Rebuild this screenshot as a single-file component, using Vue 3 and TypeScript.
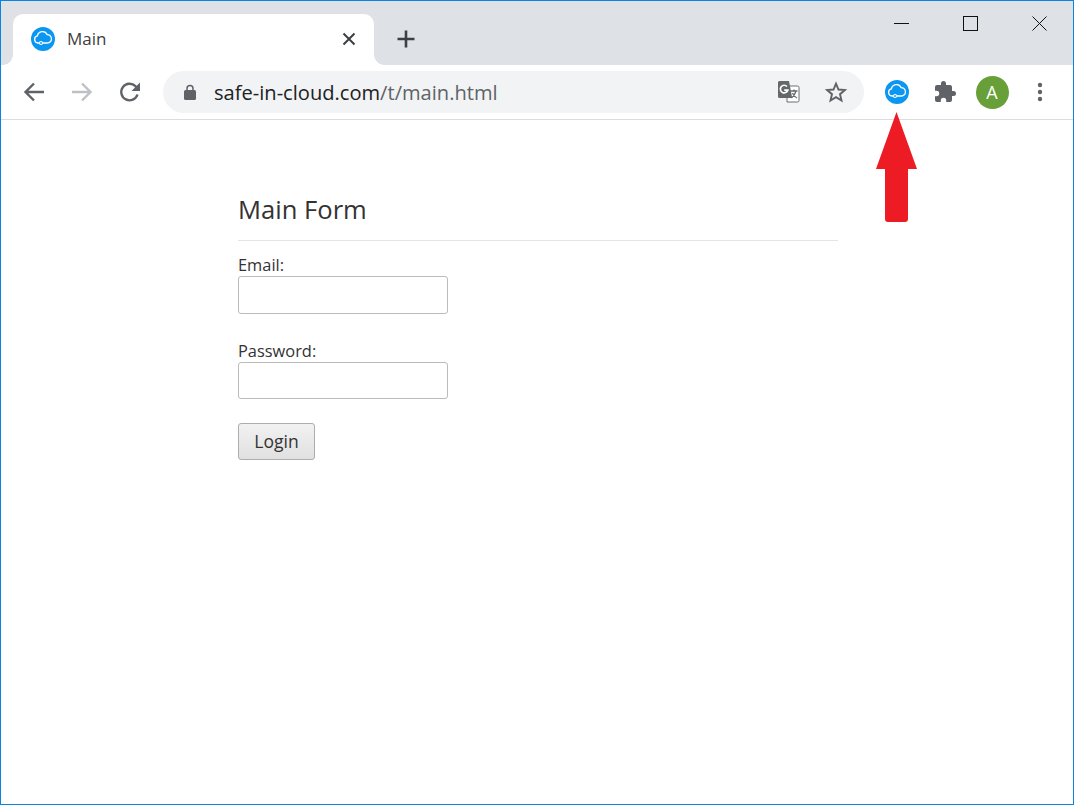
<script setup lang="ts">
const logoCloud = "M8.300 16H7a3.600 3.600 0 0 1-.6-7.100 5.200 5.200 0 0 1 9.800-1.300 4.200 4.200 0 0 1 1.800 8c-.5.300-1.100.4-1.800.4h-4.600"
</script>

<template>
  <div class="window">
    <header class="titlebar">
      <div class="tab">
        <svg class="logo" width="24" height="24" viewBox="0 0 24 24">
          <circle cx="12" cy="12" r="12" fill="#0b96f2" />
          <path :d="logoCloud" fill="none" stroke="#fff" stroke-width="1.300" />
          <circle cx="10" cy="16" r="1.500" fill="#0b96f2" stroke="#fff" stroke-width="1.100" />
        </svg>
        <span class="tab-title">Main</span>
        <svg class="tab-close" width="14" height="14" viewBox="0 0 14 14">
          <path d="M1.500 1.500l11 11M12.500 1.500l-11 11" stroke="#3c4043" stroke-width="2" />
        </svg>
      </div>
      <svg class="plus" width="20" height="20" viewBox="0 0 20 20">
        <path d="M10 1.500v17M1.500 10h17" stroke="#3c4043" stroke-width="2.600" />
      </svg>
      <div class="controls">
        <div class="ctl"><svg width="16" height="16" viewBox="0 0 16 16"><path d="M0 7.500h15" stroke="#111" /></svg></div>
        <div class="ctl"><svg width="16" height="16" viewBox="0 0 16 16"><rect x=".5" y=".5" width="14" height="14" fill="none" stroke="#111" /></svg></div>
        <div class="ctl"><svg width="16" height="16" viewBox="0 0 16 16"><path d="M.5 .5l14 14M14.500 .5l-14 14" stroke="#111" /></svg></div>
      </div>
    </header>

    <nav class="toolbar">
      <div class="btn">
        <svg width="24" height="24" viewBox="0 0 24 24"><path d="M22 12H3.500M12 3.500L3.500 12l8.500 8.500" fill="none" stroke="#5f6368" stroke-width="2.400" /></svg>
      </div>
      <div class="btn">
        <svg width="24" height="24" viewBox="0 0 24 24"><path d="M2 12h18.500M12 3.500l8.500 8.500-8.500 8.500" fill="none" stroke="#bdc1c6" stroke-width="2.400" /></svg>
      </div>
      <div class="btn">
        <svg width="24" height="24" viewBox="0 0 24 24">
          <path d="M19.500 14.500a8.300 8.300 0 1 1-2-8.300L20 9" fill="none" stroke="#5f6368" stroke-width="2.400" />
          <path d="M22 2.500V11h-8.500z" fill="#5f6368" />
        </svg>
      </div>
      <div class="omnibox">
        <svg class="lock" width="12" height="16" viewBox="0 0 12 16">
          <path d="M3 6.500V4.500a3 3 0 0 1 6 0v2" fill="none" stroke="#5f6368" stroke-width="1.500" />
          <rect x="0" y="6" width="12" height="10" rx="1.500" fill="#5f6368" />
        </svg>
        <span class="url"><span class="host">safe-in-cloud.com</span>/t/main.html</span>
        <svg class="translate" width="22" height="22" viewBox="0 0 22 22">
          <path d="M9 5h10.500a1.500 1.500 0 0 1 1.500 1.500v13a1.500 1.500 0 0 1-1.500 1.500H9z" fill="#fff" stroke="#6a6d70" />
          <path d="M1.500 0H11l3.200 17H1.500A1.500 1.500 0 0 1 0 15.500v-14A1.500 1.500 0 0 1 1.500 0z" fill="#65686b" />
          <path d="M9 5.500a3.800 3.800 0 1 0 .8 3.700H6.200" fill="none" stroke="#fff" stroke-width="1.700" />
          <path d="M12.500 10h7M16 8.500V10M18 10c-1 3.500-2.500 5.500-4.500 7M14.500 12c1 2.500 2.500 4 4.500 5" fill="none" stroke="#65686b" stroke-width="1.300" />
        </svg>
        <svg class="star" width="22" height="22" viewBox="0 0 22 22">
          <path d="M11 2.600l2.500 5.900 6.400.5-4.900 4.200 1.500 6.300L11 16.200l-5.500 3.300L7 13.200 2.100 9l6.400-.5z" fill="none" stroke="#5f6368" stroke-width="1.900" stroke-linejoin="miter" />
        </svg>
      </div>
      <div class="actions">
        <div class="btn">
          <svg width="24" height="24" viewBox="0 0 24 24">
            <circle cx="12" cy="12" r="12" fill="#0b96f2" />
            <path :d="logoCloud" fill="none" stroke="#fff" stroke-width="1.300" />
            <circle cx="10" cy="16" r="1.500" fill="#0b96f2" stroke="#fff" stroke-width="1.100" />
          </svg>
        </div>
        <div class="btn">
          <svg width="24" height="24" viewBox="0 0 24 24">
            <path d="M20.500 11H19V7a2 2 0 0 0-2-2h-4V3.500a2.500 2.500 0 0 0-5 0V5H4a2 2 0 0 0-2 2v3.800h1.500a2.700 2.700 0 0 1 0 5.400H2V20a2 2 0 0 0 2 2h3.800v-1.500a2.700 2.700 0 0 1 5.400 0V22H17a2 2 0 0 0 2-2v-4h1.500a2.500 2.500 0 0 0 0-5z" fill="#5f6368" />
          </svg>
        </div>
        <div class="btn"><div class="avatar">A</div></div>
        <div class="btn">
          <svg class="dots" width="6" height="22" viewBox="0 0 6 22"><circle cx="3" cy="4" r="2.200" fill="#5f6368" /><circle cx="3" cy="11" r="2.200" fill="#5f6368" /><circle cx="3" cy="18" r="2.200" fill="#5f6368" /></svg>
        </div>
      </div>
    </nav>

    <main class="page">
      <h2 class="heading">Main Form</h2>
      <form class="form" @submit.prevent>
        <label class="field field-email">
          <span>Email:</span>
          <input class="input" type="text" />
        </label>
        <label class="field">
          <span>Password:</span>
          <input class="input input-short" type="password" />
        </label>
        <button class="submit" type="button">Login</button>
      </form>
    </main>

    <svg class="arrow" width="41" height="110" viewBox="0 0 41 110">
      <path d="M20.500 0L41 57H32V107a3 3 0 0 1-3 3H12a3 3 0 0 1-3-3V57H0z" fill="#ed1c24" />
    </svg>
  </div>
</template>

<style scoped>
.window {
  position: relative;
  box-sizing: border-box;
  width: 1074px;
  height: 805px;
  border: 1px solid #0a84e0;
  background: #fff;
  display: flex;
  flex-direction: column;
  overflow: hidden;
  font-family: "Open Sans", "Noto Sans", sans-serif;
  color: #333;
}
.titlebar {
  height: 64px;
  background: #dee1e6;
  display: flex;
  align-items: flex-end;
  padding-left: 12px;
  flex: none;
}
.tab {
  position: relative;
  width: 361px;
  height: 51px;
  background: #fff;
  border-radius: 10px 10px 0 0;
  display: flex;
  align-items: center;
  padding: 0 17px 2px 18px;
  box-sizing: border-box;
}
.tab::before,
.tab::after {
  content: "";
  position: absolute;
  bottom: 0;
  width: 10px;
  height: 10px;
}
.tab::before {
  left: -10px;
  background: radial-gradient(circle at 0 0, transparent 9.500px, #fff 10px);
}
.tab::after {
  right: -10px;
  background: radial-gradient(circle at 100% 0, transparent 9.500px, #fff 10px);
}
.logo { flex: none; }
.tab-title {
  margin-left: 12px;
  font-size: 17px;
  color: #3c4043;
  flex: 1;
}
.tab-close { flex: none; margin-right: 1px; }
.plus { margin: 0 0 16px 22px; flex: none; }
.controls {
  margin-left: auto;
  align-self: flex-start;
  display: flex;
  padding: 15px 25px 0 0;
  gap: 53px;
}
.ctl { width: 16px; height: 16px; display: flex; }
.toolbar {
  height: 55px;
  box-sizing: border-box;
  border-bottom: 1px solid #dadce0;
  display: flex;
  align-items: center;
  padding: 0 9px;
  flex: none;
}
.btn {
  width: 48px;
  height: 54px;
  display: flex;
  align-items: center;
  justify-content: center;
  flex: none;
}
.omnibox {
  margin-left: 9px;
  width: 701px;
  height: 42px;
  background: #f1f3f4;
  border-radius: 21px;
  display: flex;
  align-items: center;
  padding: 0 17px 0 21px;
  box-sizing: border-box;
  flex: none;
}
.lock { flex: none; }
.url {
  margin-left: 18px;
  font-size: 20.100px;
  color: #5f6368;
  flex: 1;
  white-space: nowrap;
}
.host { color: #202124; }
.translate { flex: none; margin-right: 25px; }
.star { flex: none; }
.actions { margin-left: 9px; display: flex; }
.avatar {
  width: 33px;
  height: 33px;
  margin-right: 2px;
  border-radius: 50%;
  background: #689f38;
  color: #fff;
  font-size: 18px;
  display: flex;
  align-items: center;
  justify-content: center;
}
.dots { margin-right: 2px; }
.page {
  width: 600px;
  margin-left: 237px;
  font-size: 16.400px;
}
.heading {
  margin: 72px 0 0;
  padding-bottom: 12px;
  border-bottom: 1px solid #e5e5e5;
  font-size: 25.600px;
  line-height: 36px;
  font-weight: 400;
  color: #333;
}
.form { display: flex; flex-direction: column; align-items: flex-start; padding-top: 13px; }
.field { display: flex; flex-direction: column; line-height: 22px; margin-bottom: 24px; }
.field-email { margin-bottom: 26px; }
.input {
  box-sizing: border-box;
  width: 210px;
  height: 38px;
  border: 1px solid #bbb;
  border-radius: 3px;
  background: #fff;
  padding: 0 8px;
  outline: none;
}
.input-short { height: 37px; }
.submit {
  box-sizing: border-box;
  width: 77px;
  height: 37px;
  border: 1px solid #adadad;
  border-radius: 3px;
  background: linear-gradient(#f2f2f2, #e0e0e0);
  color: #333;
  font: inherit;
  font-size: 17.500px;
  padding: 0 0 2px;
}
.arrow {
  position: absolute;
  left: 875px;
  top: 111px;
}
</style>
